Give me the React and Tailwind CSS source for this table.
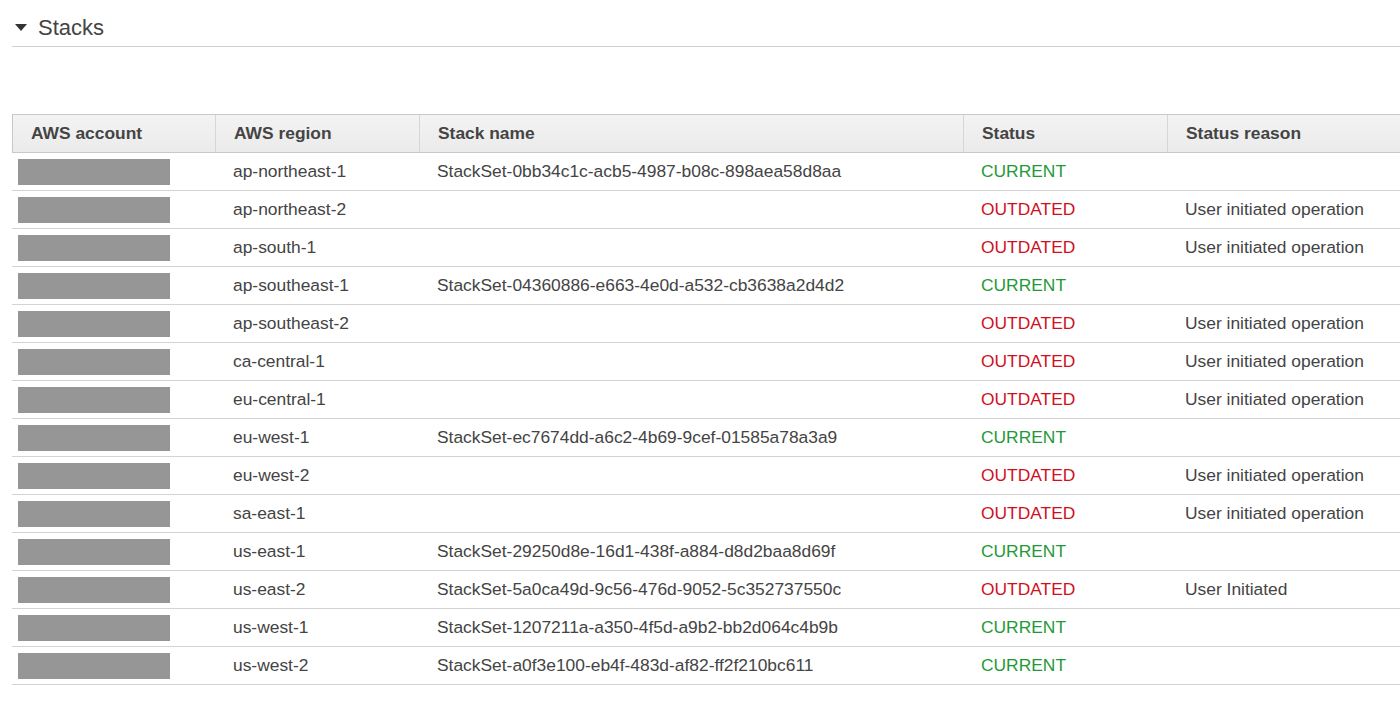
import React from "react";

const rows = [
  ["ap-northeast-1", "StackSet-0bb34c1c-acb5-4987-b08c-898aea58d8aa", "CURRENT", ""],
  ["ap-northeast-2", "", "OUTDATED", "User initiated operation"],
  ["ap-south-1", "", "OUTDATED", "User initiated operation"],
  ["ap-southeast-1", "StackSet-04360886-e663-4e0d-a532-cb3638a2d4d2", "CURRENT", ""],
  ["ap-southeast-2", "", "OUTDATED", "User initiated operation"],
  ["ca-central-1", "", "OUTDATED", "User initiated operation"],
  ["eu-central-1", "", "OUTDATED", "User initiated operation"],
  ["eu-west-1", "StackSet-ec7674dd-a6c2-4b69-9cef-01585a78a3a9", "CURRENT", ""],
  ["eu-west-2", "", "OUTDATED", "User initiated operation"],
  ["sa-east-1", "", "OUTDATED", "User initiated operation"],
  ["us-east-1", "StackSet-29250d8e-16d1-438f-a884-d8d2baa8d69f", "CURRENT", ""],
  ["us-east-2", "StackSet-5a0ca49d-9c56-476d-9052-5c352737550c", "OUTDATED", "User Initiated"],
  ["us-west-1", "StackSet-1207211a-a350-4f5d-a9b2-bb2d064c4b9b", "CURRENT", ""],
  ["us-west-2", "StackSet-a0f3e100-eb4f-483d-af82-ff2f210bc611", "CURRENT", ""],
];

const cols = "grid grid-cols-[203px_204px_544px_204px_1fr]";

export default function App() {
  return (
    <div
      className="w-[1400px] h-[701px] bg-white overflow-hidden text-[#444]"
      style={{ fontFamily: '"Liberation Sans", Arial, sans-serif' }}
    >
      <div className="pl-[12px]">
        <div className="h-[47px] border-b border-[#cfcfcf] flex items-center pt-[10px]">
          <svg width="12" height="8" viewBox="0 0 12 8" className="ml-[3px] mr-[11px] mt-[-1px]">
            <polygon points="0,0 12,0 6,7" fill="#333" />
          </svg>
          <span className="text-[22px] leading-none">Stacks</span>
        </div>

        <div className="mt-[67px]">
          <div className={`${cols} h-[39px] border-y border-l border-[#c8c8c8] bg-gradient-to-b from-[#f3f3f3] to-[#ebebeb] font-bold text-[17.4px]`}>
            {["AWS account", "AWS region", "Stack name", "Status", "Status reason"].map((h, i) => (
              <div
                key={h}
                className={`flex items-center pl-[18px] ${i < 4 ? "border-r border-[#d6d6d6]" : ""}`}
              >
                {h}
              </div>
            ))}
          </div>
          {rows.map(([region, stack, status, reason]) => (
            <div key={region} className={`${cols} h-[38px] border-b border-[#d3d3d3] text-[17.4px]`}>
              <div className="flex items-center pl-[6px]">
                <div className="w-[152px] h-[26px] bg-[#969696]" />
              </div>
              <div className="flex items-center pl-[18px]">{region}</div>
              <div className="flex items-center pl-[18px]">{stack}</div>
              <div
                className={`flex items-center pl-[18px] ${status === "CURRENT" ? "text-[#1f9a36]" : "text-[#d0101e]"}`}
              >
                {status}
              </div>
              <div className="flex items-center pl-[18px] whitespace-nowrap">{reason}</div>
            </div>
          ))}
        </div>
      </div>
    </div>
  );
}
